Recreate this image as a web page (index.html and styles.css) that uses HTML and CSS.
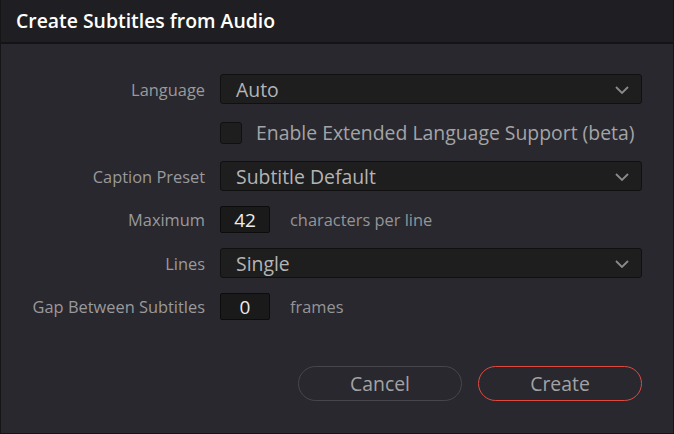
FILE: index.html
```html
<!DOCTYPE html>
<html lang="en">
<head>
  <meta charset="UTF-8">
  <title>Create Subtitles from Audio</title>
  <link rel="stylesheet" href="styles.css">
</head>
<body>
  <div class="dialog">
    <div class="title-bar">Create Subtitles from Audio</div>
    <div class="content">
      <div class="form">
        <div class="label">Language</div>
        <div class="select">
          <span>Auto</span>
          <svg class="chevron" width="14" height="8" viewBox="0 0 14 8"><path d="M1 1 L7 7 L13 1" fill="none" stroke="#8a8a8d" stroke-width="1.8"/></svg>
        </div>

        <div class="label"></div>
        <div class="check-row">
          <div class="checkbox"></div>
          <span>Enable Extended Language Support (beta)</span>
        </div>

        <div class="label">Caption Preset</div>
        <div class="select">
          <span>Subtitle Default</span>
          <svg class="chevron" width="14" height="8" viewBox="0 0 14 8"><path d="M1 1 L7 7 L13 1" fill="none" stroke="#8a8a8d" stroke-width="1.8"/></svg>
        </div>

        <div class="label">Maximum</div>
        <div class="num-row">
          <div class="num">42</div>
          <span class="unit">characters per line</span>
        </div>

        <div class="label">Lines</div>
        <div class="select">
          <span>Single</span>
          <svg class="chevron" width="14" height="8" viewBox="0 0 14 8"><path d="M1 1 L7 7 L13 1" fill="none" stroke="#8a8a8d" stroke-width="1.8"/></svg>
        </div>

        <div class="label">Gap Between Subtitles</div>
        <div class="num-row">
          <div class="num">0</div>
          <span class="unit">frames</span>
        </div>
      </div>

      <div class="buttons">
        <button class="btn">Cancel</button>
        <button class="btn btn-primary">Create</button>
      </div>
    </div>
  </div>
</body>
</html>
```

FILE: styles.css
```css
* {
  margin: 0;
  padding: 0;
  box-sizing: border-box;
  font-family: 'Open Sans', 'Noto Sans', sans-serif;
}

body {
  width: 674px;
  height: 434px;
  background: #151517;
  overflow: hidden;
}

.dialog {
  width: 674px;
  height: 434px;
  border: 1px solid #151517;
  border-top: none;
  background: #28282e;
  display: flex;
  flex-direction: column;
}

.title-bar {
  height: 44px;
  padding: 7px 0 0 15px;
  background: #1f1f23;
  border-bottom: 2px solid #141416;
  color: #ffffff;
  font-size: 19.4px;
  font-weight: 600;
}

.content {
  flex: 1;
  padding: 30px 31px 0 0;
}

.form {
  display: grid;
  grid-template-columns: 204px 1fr;
  grid-auto-rows: 30px;
  row-gap: 13.6px;
  column-gap: 15px;
}

.label {
  display: flex;
  align-items: center;
  justify-content: flex-end;
  color: #9a9a9c;
  font-size: 16.4px;
}

.select {
  display: flex;
  align-items: center;
  justify-content: space-between;
  padding: 0 12px 0 15px;
  background: #1e1e1f;
  border: 1px solid #101011;
  border-radius: 3px;
  color: #b4b4b6;
  font-size: 19.4px;
}

.chevron {
  margin-top: 1px;
}

.check-row {
  display: flex;
  align-items: center;
  gap: 14px;
  color: #a4a4a6;
  font-size: 19.4px;
}

.checkbox {
  width: 22px;
  height: 22px;
  background: #1e1e1f;
  border: 1px solid #101011;
  border-radius: 3px;
}

.num-row {
  display: flex;
  align-items: center;
  gap: 20px;
}

.num {
  width: 50px;
  height: 27px;
  display: flex;
  align-items: center;
  justify-content: center;
  background: #1a1a1b;
  border: 1px solid #0c0c0d;
  border-radius: 2px;
  color: #ececec;
  font-size: 19px;
}

.unit {
  color: #959597;
  font-size: 16.4px;
}

.buttons {
  display: flex;
  justify-content: flex-end;
  gap: 16px;
  margin-top: 44px;
}

.btn {
  width: 164px;
  height: 35px;
  background: transparent;
  border: 1px solid #46464c;
  border-radius: 18px;
  color: #a2a2a4;
  font-size: 19.4px;
}

.btn-primary {
  border-color: #e04a3e;
}
```
